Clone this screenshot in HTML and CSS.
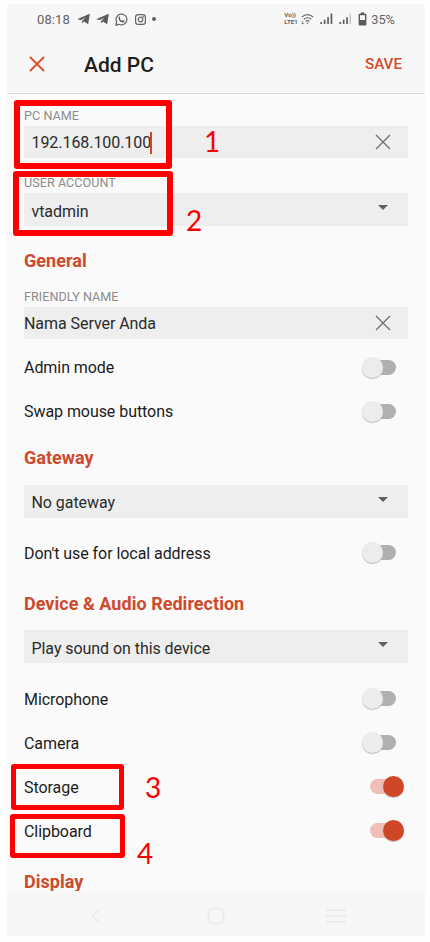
FILE: index.html
```html
<!DOCTYPE html>
<html lang="en">
<head>
<meta charset="utf-8">
<title>Add PC</title>
<link rel="stylesheet" href="styles.css">
</head>
<body>
<main class="phone">
  <header class="header">
    <div class="status">
      <span class="time">08:18</span>
      <svg class="plane" width="13" height="12" viewBox="0 0 13 12"><path d="M0 6.2 12.8.7 11.2 11.2 7 8.6 5.2 10.6 5.1 7.9 8.5 4.5 4.1 7z"/></svg>
      <svg class="plane second" width="13" height="12" viewBox="0 0 13 12"><path d="M0 6.2 12.8.7 11.2 11.2 7 8.6 5.2 10.6 5.1 7.9 8.5 4.5 4.1 7z"/></svg>
      <svg class="whatsapp" width="13" height="13" viewBox="0 0 13 13"><path class="line" d="M.9 12.1 1.7 9A5.4 5.4 0 1 1 4 11.3z"/><path d="M4.5 3.3 5.3 5l-.5.8q.8 1.4 2.2 2l.8-.8 1.7.9q-.2 1.5-1.7 1.5Q4.2 9 3.5 5.3 3.4 3.9 4.5 3.3z"/></svg>
      <svg class="instagram" width="11" height="11" viewBox="0 0 11 11"><rect class="line" x=".6" y=".6" width="9.8" height="9.8" rx="2.7"/><circle class="line" cx="5.5" cy="5.5" r="2.3"/><circle cx="8.3" cy="2.7" r=".7"/></svg>
      <i class="dot"></i>
      <span class="volte"><span>Vo))</span><span>LTE1</span></span>
      <svg class="wifi" width="13" height="12" viewBox="0 0 13 12"><path class="line" d="M.7 4.1Q6.5-1 12.3 4.1M2.7 6.3q3.8-3.1 7.6 0M4.6 8.3q1.9-1.4 3.8 0"/><path d="m5.3 9.7 1.2 1.4 1.2-1.4zM.4 9.3l1.2-1.4 1.2 1.4zM.4 10l1.2 1.4L2.8 10z"/></svg>
      <svg class="signal" width="13" height="12" viewBox="0 0 13 12"><path d="M.4 9h1.6v2H.4zM3.8 6.8h1.7V11H3.8zM7.2 4.2h1.7V11H7.2zM10.6.6h1.7V11h-1.7z"/></svg>
      <svg class="signal two" width="13" height="12" viewBox="0 0 13 12"><path d="M.4 9h1.6v2H.4zM3.8 6.8h1.7V11H3.8zM7.2 4.2h1.7V11H7.2z"/><path class="weak" d="M10.6.6h1.2V11h-1.2z"/></svg>
      <svg class="battery" width="9" height="14" viewBox="0 0 9 14"><path fill-rule="evenodd" d="M2.7.5h3.6v1.3h1.1q1 0 1 1v9.7q0 1-1 1H1.6q-1 0-1-1V2.8q0-1 1-1h1.1zM2 3.3v4.8h5V3.3z"/></svg>
      <span class="percent">35%</span>
    </div>
    <div class="toolbar">
      <svg class="close" width="16" height="16" viewBox="0 0 16 16"><path d="m1 1 14 14M15 1 1 15"/></svg>
      <h1>Add PC</h1>
      <button class="save">SAVE</button>
    </div>
  </header>

  <section class="form">
    <div class="label">PC NAME</div>
    <div class="field"><span>192.168.100.100</span><i class="caret"></i><svg class="clear" width="16" height="16" viewBox="0 0 16 16"><path d="m1 1 14 14M15 1 1 15"/></svg></div>
    <div class="label account">USER ACCOUNT</div>
    <div class="field select"><span>vtadmin</span><i class="arrow"></i></div>

    <h2 class="general">General</h2>
    <div class="label">FRIENDLY NAME</div>
    <div class="field flush"><span>Nama Server Anda</span><svg class="clear" width="16" height="16" viewBox="0 0 16 16"><path d="m1 1 14 14M15 1 1 15"/></svg></div>
    <div class="rows">
      <div class="row"><span>Admin mode</span><i class="switch"></i></div>
      <div class="row"><span>Swap mouse buttons</span><i class="switch"></i></div>
    </div>

    <h2 class="gateway">Gateway</h2>
    <div class="field select"><span>No gateway</span><i class="arrow"></i></div>
    <div class="rows local">
      <div class="row"><span>Don't use for local address</span><i class="switch"></i></div>
    </div>

    <h2 class="device">Device &amp; Audio Redirection</h2>
    <div class="field select"><span>Play sound on this device</span><i class="arrow"></i></div>
    <div class="rows devices">
      <div class="row"><span>Microphone</span><i class="switch"></i></div>
      <div class="row"><span>Camera</span><i class="switch"></i></div>
      <div class="row"><span>Storage</span><i class="switch on"></i></div>
      <div class="row"><span>Clipboard</span><i class="switch on"></i></div>
    </div>
    <h2 class="display">Display</h2>
  </section>

  <nav class="nav">
    <svg width="12" height="18" viewBox="0 0 12 18"><path d="M10 2 2 9l8 7"/></svg>
    <svg width="20" height="20" viewBox="0 0 20 20"><circle cx="10" cy="10" r="8"/></svg>
    <svg width="20" height="16" viewBox="0 0 20 16"><path d="M0 2h20M0 8h20M0 14h20"/></svg>
  </nav>
</main>

<div class="mark m1"></div><div class="mark m2"></div><div class="mark m3"></div><div class="mark m4"></div>
<span class="num n1">1</span><span class="num n2">2</span><span class="num n3">3</span><span class="num n4">4</span>
</body>
</html>
```
FILE: styles.css
```css
* { box-sizing: border-box; }
body {
  margin: 0;
  position: relative;
  width: 430px;
  height: 942px;
  padding: 4px 5px 6px 7px;
  overflow: hidden;
  background: #fefefe;
  font-family: Roboto, "Liberation Sans", sans-serif;
}
.phone {
  height: 932px;
  display: flex;
  flex-direction: column;
  background: #fafafa;
}
svg { flex: none; display: block; }
.header {
  height: 90px;
  flex: none;
  background: #f7f7f7;
  border-bottom: 1px solid #d9d9d9;
}
.status {
  height: 30px;
  display: flex;
  align-items: center;
  padding: 0 30px;
  color: #646464;
  fill: #5c5c5c;
  font-size: 13px;
}
.status .line { fill: none; stroke: #646464; stroke-width: 1.2; }
.time { width: 33px; letter-spacing: .1px; }
.plane { margin-left: 7px; }
.plane.second { margin-left: 6px; }
.whatsapp { margin-left: 6px; }
.instagram { margin-left: 7px; }
.dot { width: 4px; height: 4px; margin-left: 6px; border-radius: 50%; background: #606060; }
.volte {
  margin-left: auto;
  display: flex;
  flex-direction: column;
  width: 14px;
  font-size: 6.2px;
  line-height: 7px;
  font-weight: 700;
  white-space: nowrap;
}
.wifi { margin-left: 3px; }
.signal { margin-left: 6px; }
.signal.two { margin-left: 6px; }
.weak { fill: #bbb; }
.battery { margin-left: 6px; }
.percent { margin-left: 4px; font-size: 12.8px; }
.toolbar {
  height: 59px;
  display: flex;
  align-items: center;
  padding: 0 23px 0 22px;
}
.close path { stroke: #d64f2f; stroke-width: 1.9; }
h1 {
  margin: 2px 0 0 39px;
  font-size: 21px;
  line-height: 28px;
  font-weight: 500;
  color: #1e1e1e;
}
.save {
  margin-left: auto;
  padding: 0;
  border: 0;
  background: none;
  font: 500 15.2px/20px Roboto, sans-serif;
  color: #d24b2b;
}
.form {
  height: 797px;
  padding: 11px 17px 0;
  overflow: hidden;
  font-size: 16px;
  letter-spacing: -.06px;
  color: #1c1c1c;
}
.label {
  height: 21px;
  line-height: 21px;
  font-size: 12.6px;
  letter-spacing: .04px;
  color: #8c8c8c;
}
.label.account { margin-top: 14px; }
.field {
  height: 32px;
  display: flex;
  align-items: center;
  padding: 1px 17px 0 7.5px;
  background: #eee;
  color: #2b2b2b;
}
.field.flush { padding-left: 0; }
.field.select { height: 33px; padding: 3px 20px 0 7.5px; }
.gateway + .field.select { padding-top: 2px; }
.caret { width: 2px; height: 22px; margin-left: -1px; background: #c9482c; }
.clear { margin: -1px 0 0 auto; }
.clear path { stroke: #707070; stroke-width: 1.4; }
.arrow {
  margin: -7px 0 0 auto;
  border: 5px solid transparent;
  border-top-color: #606060;
  border-bottom: 0;
}
h2 {
  margin: 0;
  display: flex;
  align-items: center;
  font-size: 18px;
  font-weight: 700;
  letter-spacing: .03px;
  color: #ce4a2c;
}
.general { height: 50px; margin-top: 10px; padding-bottom: 2px; }
.gateway { height: 51px; padding-bottom: 5px; }
.device { height: 55px; padding-top: 1px; }
.display { height: 58px; padding-bottom: 2px; }
.rows { margin-top: 7px; }
.rows.local { margin-top: 13px; }
.rows.devices { margin-top: 14px; }
.row {
  height: 44px;
  display: flex;
  align-items: center;
  justify-content: space-between;
  padding: 0 12px 1px 0;
}
.local .row span,
.devices .row span { padding-top: 2px; }
.switch {
  width: 34px;
  height: 15px;
  display: flex;
  align-items: center;
  border-radius: 8px;
  background: linear-gradient(90deg, transparent 10px, #b0b0b0 10px);
}
.switch::before {
  content: "";
  width: 21px;
  height: 21px;
  flex: none;
  border-radius: 50%;
  background: #ececec;
  box-shadow: 0 1px 1px #bbb;
}
.switch.on {
  margin-right: -8px;
  justify-content: flex-end;
  background: linear-gradient(90deg, #efbfb6 24px, transparent 24px);
}
.switch.on::before { background: #d04727; }
.nav {
  height: 45px;
  display: flex;
  align-items: center;
  justify-content: space-between;
  padding: 4px 79px 0 83px;
  background: #f7f7f7;
}
.nav svg { fill: none; stroke: #e9e9e9; stroke-width: 1.4; }
.nav svg:nth-child(2) { margin-left: 4px; }
.mark { position: absolute; border: 6px solid #fe0000; border-radius: 3px; }
.m1 { left: 14px; top: 100px; width: 158px; height: 69px; }
.m2 { left: 13px; top: 171px; width: 160px; height: 65px; }
.m3 { left: 11px; top: 764px; width: 113px; height: 46px; border-width: 5.5px; }
.m4 { left: 10px; top: 814px; width: 115px; height: 44px; border-width: 5.5px; }
.num { position: absolute; font: 28px/34px Lato, sans-serif; color: #fe0000; }
.n1 { left: 204px; top: 124px; }
.n2 { left: 186px; top: 203px; }
.n3 { left: 145px; top: 770px; }
.n4 { left: 137px; top: 836px; }
```
